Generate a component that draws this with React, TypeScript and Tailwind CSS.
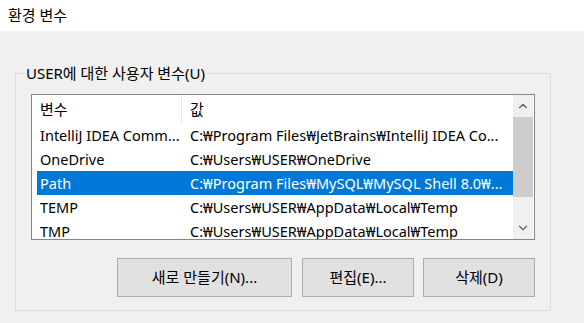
import { ChevronUp, ChevronDown } from "lucide-react";

const rows = [
  { name: "IntelliJ IDEA Comm...", value: "C:₩Program Files₩JetBrains₩IntelliJ IDEA Co..." },
  { name: "OneDrive", value: "C:₩Users₩USER₩OneDrive" },
  { name: "Path", value: "C:₩Program Files₩MySQL₩MySQL Shell 8.0₩...", selected: true },
  { name: "TEMP", value: "C:₩Users₩USER₩AppData₩Local₩Temp" },
  { name: "TMP", value: "C:₩Users₩USER₩AppData₩Local₩Temp" },
];

export default function App() {
  return (
    <div className="w-[584px] h-[323px] bg-[#f0f0f0] text-black overflow-hidden font-['Noto_Sans','Noto_Sans_CJK_KR',sans-serif]">
      {/* title bar */}
      <div className="h-[31px] bg-white flex items-center pl-[8px] text-[15px]">
        환경 변수
      </div>

      <fieldset className="ml-[15px] mt-[32px] w-[536px] h-[248px] border border-[#dcdcdc] px-[15px]">
        <legend className="ml-[-7px] px-[2px] text-[15px] leading-[20px]">
          USER에 대한 사용자 변수(U)
        </legend>

        <div className="mt-[11px] h-[146px] border border-[#828790] bg-white flex text-[14.5px] leading-[24px]">
          <div className="flex-1 overflow-hidden">
            <div className="h-[28px] flex items-center text-[15px]">
              <div className="w-[150px] pl-[8px] h-full flex items-center border-r border-[#e5e5e5]">변수</div>
              <div className="pl-[8px]">값</div>
            </div>
            {rows.map((r) => (
              <div
                key={r.name}
                className={`h-[24px] ml-[5px] flex whitespace-nowrap ${
                  r.selected ? "bg-[#0078d7] text-white" : ""
                }`}
              >
                <div className="w-[145px] pl-[3px]">{r.name}</div>
                <div className="pl-[8px]">{r.value}</div>
              </div>
            ))}
          </div>
          {/* scrollbar */}
          <div className="w-[20px] mr-[1px] bg-[#f0f0f0] flex flex-col">
            <div className="h-[22px] flex items-center justify-center text-[#606060]">
              <ChevronUp size={14} strokeWidth={2} />
            </div>
            <div className="h-[80px] bg-[#cdcdcd]" />
            <div className="flex-1" />
            <div className="h-[22px] flex items-center justify-center text-[#606060]">
              <ChevronDown size={14} strokeWidth={2} />
            </div>
          </div>
        </div>

        <div className="mt-[18px] flex justify-end text-[15px]">
          <button className="w-[175px] h-[39px] bg-[#e1e1e1] border border-[#adadad]">새로 만들기(N)...</button>
          <button className="ml-[10px] w-[112px] h-[39px] bg-[#e1e1e1] border border-[#adadad]">편집(E)...</button>
          <button className="ml-[9px] w-[112px] h-[39px] bg-[#e1e1e1] border border-[#adadad]">삭제(D)</button>
        </div>
      </fieldset>
    </div>
  );
}
